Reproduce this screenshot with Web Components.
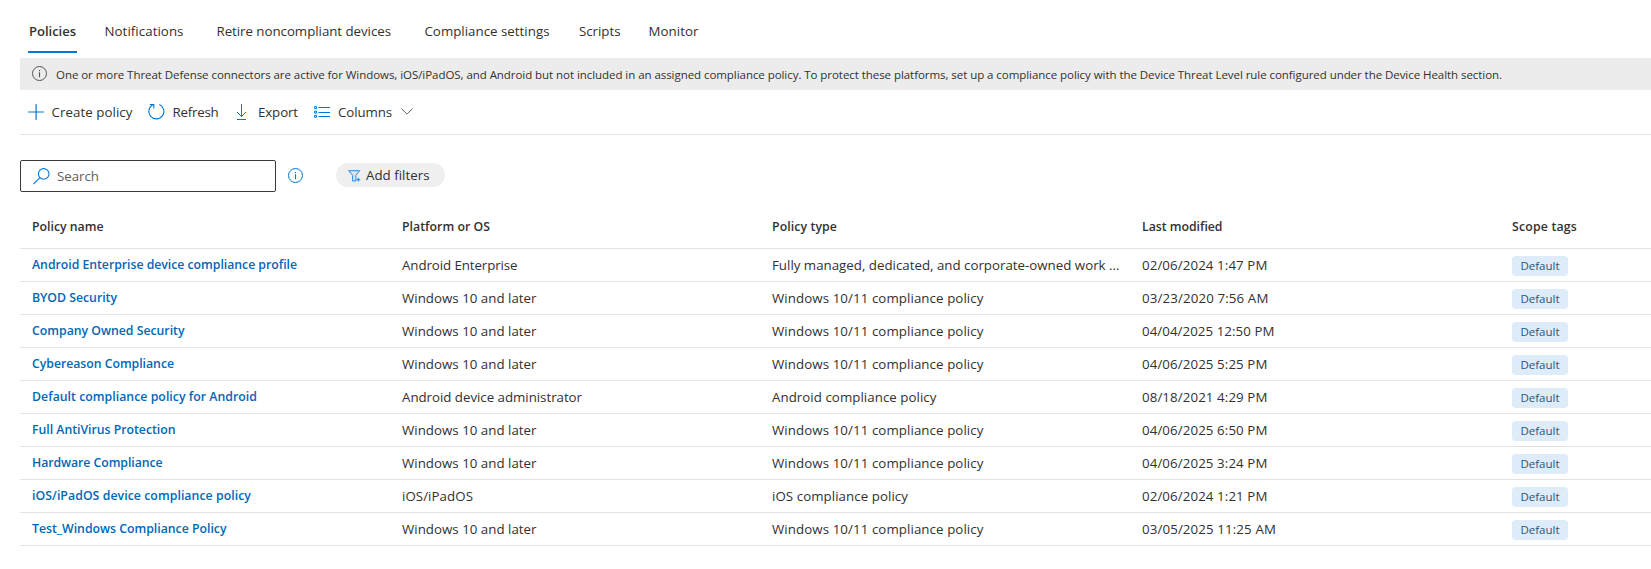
<!DOCTYPE html>
<html lang="en">
<head>
<meta charset="utf-8">
<title>Compliance policies</title>
<style>
html, body { margin: 0; height: 100%; overflow: hidden; background: #fff; }
body { font-family: "Open Sans", "Noto Sans", sans-serif; font-size: 13.3px; color: #323130; }
</style>
</head>
<body>
<compliance-page></compliance-page>
<script>
const mount = (el, html) => { el.attachShadow({ mode: 'open' }).innerHTML = html; };

/* Text run whose tracking is adjusted to fill the width given in "w". */
class FitText extends HTMLElement {
  connectedCallback() {
    if (this.shadowRoot) return;
    mount(this, `<style>:host{display:inline-block;white-space:nowrap}span{display:inline-block}</style><span><slot></slot></span>`);
    /* Text forwarded through a parent's slot is read from the parent and inherits its tracking. */
    const host = this.getRootNode().host;
    const forwarded = !this.textContent;
    const n = (forwarded ? host : this).textContent.length;
    const span = this.shadowRoot.querySelector('span');
    const spacing = (parseFloat(this.getAttribute('w')) - span.getBoundingClientRect().width) / n;
    (forwarded ? host : this).style.letterSpacing = spacing.toFixed(4) + 'px';
  }
}

const ICONS = {
  info: [16, 16, `<circle cx="7.5" cy="7.5" r="7" fill="none" stroke="currentColor"/><path d="M7.5 6.3v4.9M7.5 4v1.2" stroke="currentColor" stroke-width="1.1"/>`],
  plus: [16, 16, `<path d="M8.1 0v16M0 8h16" stroke="currentColor" stroke-width="1.2"/>`],
  refresh: [17, 17, `<path d="M11.3 1.5A7.5 7.5 0 1 1 5.2 1.6" fill="none" stroke="currentColor" stroke-width="1.1"/><path d="M1.8 1.5h4v4" fill="none" stroke="currentColor" stroke-width="1.1"/>`],
  download: [11, 16, `<path d="M5.5 0v12.2M1 8l4.5 4.5L10 8M1 15.5h9" fill="none" stroke="currentColor"/>`],
  columns: [16, 12, `<g fill="none" stroke="currentColor"><path d="M4.5 1.5H16M4.5 6.5H16M4.5 10.5H16"/><path d="M.6 .6h2v2h-2zM.6 5.1h2v2h-2zM.6 9.3h2v2h-2z"/></g>`],
  chevron: [12, 7, `<path d="M.4 .5 6 6.1 11.6 .5" fill="none" stroke="currentColor"/>`],
  search: [17, 17, `<circle cx="10.7" cy="5.9" r="5.3" fill="none" stroke="currentColor" stroke-width="1.1"/><path d="M6.9 9.7.4 16.2" stroke="currentColor" stroke-width="1.1"/>`],
  filter: [13, 12, `<path d="M.7 .7h11L7.9 5.4v5.6H4.6V5.4z" fill="#d0e6f9" stroke="#2b8bdc"/><path d="M10.4 7.8v3.6M8.6 9.6h3.6" stroke="#2b8bdc" stroke-width="1.1"/>`]
};
class UiIcon extends HTMLElement {
  connectedCallback() {
    if (this.shadowRoot) return;
    const [w, h, body] = ICONS[this.getAttribute('name')];
    mount(this, `<style>:host{display:block;flex:none;width:${w}px;height:${h}px}svg{display:block}</style><svg width="${w}" height="${h}" viewBox="0 0 ${w} ${h}">${body}</svg>`);
  }
}

class TabBar extends HTMLElement {
  connectedCallback() {
    const tabs = [['Policies', 47, 28], ['Notifications', 79, 27.5], ['Retire noncompliant devices', 174.5, 33], ['Compliance settings', 125, 33.5], ['Scripts', 41.5, 29.5], ['Monitor', 50, 28]];
    mount(this, `<style>
      :host{display:flex;height:53px;box-sizing:border-box}
      .tab{display:flex;line-height:18px;padding-top:22px;box-sizing:border-box;height:53px}
      .active{font-weight:600;font-size:13.1px;border-bottom:2px solid #0078d4;padding-left:1px;padding-right:1px}
    </style>` + tabs.map(([t, w, gap], i) => `<div class="tab${i ? '' : ' active'}" style="margin-left:${gap}px"><fit-text w="${w}">${t}</fit-text></div>`).join(''));
  }
}

class NoticeBar extends HTMLElement {
  connectedCallback() {
    mount(this, `<style>
      :host{display:flex;align-items:center;gap:8px;height:32px;margin:5px 0 0 20px;padding-left:12px;background:#ececec;font-size:11.5px;box-sizing:border-box}
      ui-icon{color:#555}
      fit-text{margin-top:1px}
    </style><ui-icon name="info"></ui-icon><fit-text w="1446"><slot></slot></fit-text>`);
  }
}

class CommandButton extends HTMLElement {
  connectedCallback() {
    mount(this, `<style>
      :host{display:flex;align-items:center}
      ui-icon{color:#0078d4}
      fit-text{line-height:18px}
      .more{color:#666;margin-left:9px}
    </style><ui-icon name="${this.getAttribute('icon')}"></ui-icon>
    <fit-text w="${this.getAttribute('w')}" style="margin-left:${this.getAttribute('gap')}px">${this.getAttribute('label')}</fit-text>
    ${this.hasAttribute('menu') ? '<ui-icon class="more" name="chevron"></ui-icon>' : ''}`);
  }
}

class CommandBar extends HTMLElement {
  connectedCallback() {
    mount(this, `<style>
      :host{display:flex;align-items:center;height:45px;box-sizing:border-box;margin-left:20px;padding:0 0 1px 8px;border-bottom:1px solid #e3e3e3}
    </style>
    <command-button icon="plus" gap="7.5" w="81" label="Create policy"></command-button>
    <command-button icon="refresh" gap="7.5" w="46" label="Refresh" style="margin-left:15.5px"></command-button>
    <command-button icon="download" gap="11" w="40" label="Export" style="margin-left:17.5px"></command-button>
    <command-button icon="columns" gap="8" w="54" label="Columns" menu style="margin-left:16px"></command-button>`);
  }
}

class FilterRow extends HTMLElement {
  connectedCallback() {
    mount(this, `<style>
      :host{display:flex;height:32px;margin:25px 0 0 20px}
      ui-icon{color:#0078d4}
      .search{display:flex;box-sizing:border-box;width:256px;height:32px;border:1px solid #3b3a39;border-radius:2px;padding:6px 0 0 12px;color:#605e5c}
      .search ui-icon{margin-top:1px}
      .search fit-text{line-height:18px;margin-left:7px}
      .info{margin:8px 0 0 12px}
      .pill{display:flex;box-sizing:border-box;width:109px;height:24px;border-radius:12px;background:#efefef;margin:3px 0 0 32px;padding-left:12px}
      .pill ui-icon{margin-top:7px}
      .pill fit-text{line-height:24px;margin-left:5px}
    </style>
    <div class="search"><ui-icon name="search"></ui-icon><fit-text w="42">Search</fit-text></div>
    <ui-icon class="info" name="info"></ui-icon>
    <div class="pill"><ui-icon name="filter"></ui-icon><fit-text w="63.5">Add filters</fit-text></div>`);
  }
}

class ScopeTag extends HTMLElement {
  connectedCallback() {
    mount(this, `<style>:host{display:flex;justify-content:center;box-sizing:border-box;width:56px;height:20px;line-height:19px;border-radius:4px;background:#deecf9;color:#24557f;font-size:11.5px}</style><fit-text w="39"><slot></slot></fit-text>`);
  }
}

class PolicyRow extends HTMLElement {
  connectedCallback() {
    const [name, os, type, date] = this.data;
    const fit = ([t, w]) => `<fit-text w="${w}">${t}</fit-text>`;
    mount(this, `<style>
      :host{display:grid;grid-template-columns:repeat(4,370px) 1fr;height:33px;box-sizing:border-box;border-bottom:1px solid #e3e3e3;padding-left:12px;line-height:32px}
      a{color:#0067b8;font-weight:600;font-size:12.3px;line-height:31px}
      scope-tag{margin-top:7px}
    </style><a>${fit(name)}</a><div>${fit(os)}</div><div>${fit(type)}</div><div>${fit(date)}</div><scope-tag>Default</scope-tag>`);
  }
}

class PolicyTable extends HTMLElement {
  connectedCallback() {
    const win = ['Windows 10 and later', 134.5], wt = ['Windows 10/11 compliance policy', 211.5];
    const rows = [
      [['Android Enterprise device compliance profile', 265], ['Android Enterprise', 115.5], ['Fully managed, dedicated, and corporate-owned work ...', 347.5], ['02/06/2024 1:47 PM', 125.5]],
      [['BYOD Security', 85], win, wt, ['03/23/2020 7:56 AM', 126.5]],
      [['Company Owned Security', 152.5], win, wt, ['04/04/2025 12:50 PM', 132.5]],
      [['Cybereason Compliance', 142], win, wt, ['04/06/2025 5:25 PM', 125.5]],
      [['Default compliance policy for Android', 225], ['Android device administrator', 180], ['Android compliance policy', 164.5], ['08/18/2021 4:29 PM', 125.5]],
      [['Full AntiVirus Protection', 143.5], win, wt, ['04/06/2025 6:50 PM', 125.5]],
      [['Hardware Compliance', 130.5], win, wt, ['04/06/2025 3:24 PM', 125.5]],
      [['iOS/iPadOS device compliance policy', 219], ['iOS/iPadOS', 71], ['iOS compliance policy', 136], ['02/06/2024 1:21 PM', 125.5]],
      [['Test_Windows Compliance Policy', 194.5], win, wt, ['03/05/2025 11:25 AM', 134]]
    ];
    const heads = [['Policy name', 71.5], ['Platform or OS', 88], ['Policy type', 65], ['Last modified', 80.5], ['Scope tags', 65]];
    mount(this, `<style>
      :host{display:block;margin-left:20px}
      .head{display:grid;grid-template-columns:repeat(4,370px) 1fr;box-sizing:border-box;height:57px;padding:26px 0 0 12px;line-height:18px;font-weight:600;font-size:12.3px;border-bottom:1px solid #e3e3e3}
    </style><div class="head">${heads.map(([t, w]) => `<div><fit-text w="${w}">${t}</fit-text></div>`).join('')}</div>`);
    for (const r of rows) {
      const el = document.createElement('policy-row');
      el.data = r;
      this.shadowRoot.append(el);
    }
  }
}

class CompliancePage extends HTMLElement {
  connectedCallback() {
    mount(this, `<style>:host{display:block}</style>
    <tab-bar></tab-bar>
    <notice-bar>One or more Threat Defense connectors are active for Windows, iOS/iPadOS, and Android but not included in an assigned compliance policy. To protect these platforms, set up a compliance policy with the Device Threat Level rule configured under the Device Health section.</notice-bar>
    <command-bar></command-bar>
    <filter-row></filter-row>
    <policy-table></policy-table>`);
  }
}

const defs = { 'ui-icon': UiIcon, 'fit-text': FitText, 'scope-tag': ScopeTag, 'command-button': CommandButton, 'tab-bar': TabBar, 'notice-bar': NoticeBar, 'command-bar': CommandBar, 'filter-row': FilterRow, 'policy-row': PolicyRow, 'policy-table': PolicyTable, 'compliance-page': CompliancePage };
for (const [tag, cls] of Object.entries(defs)) customElements.define(tag, cls);
</script>
</body>
</html>
